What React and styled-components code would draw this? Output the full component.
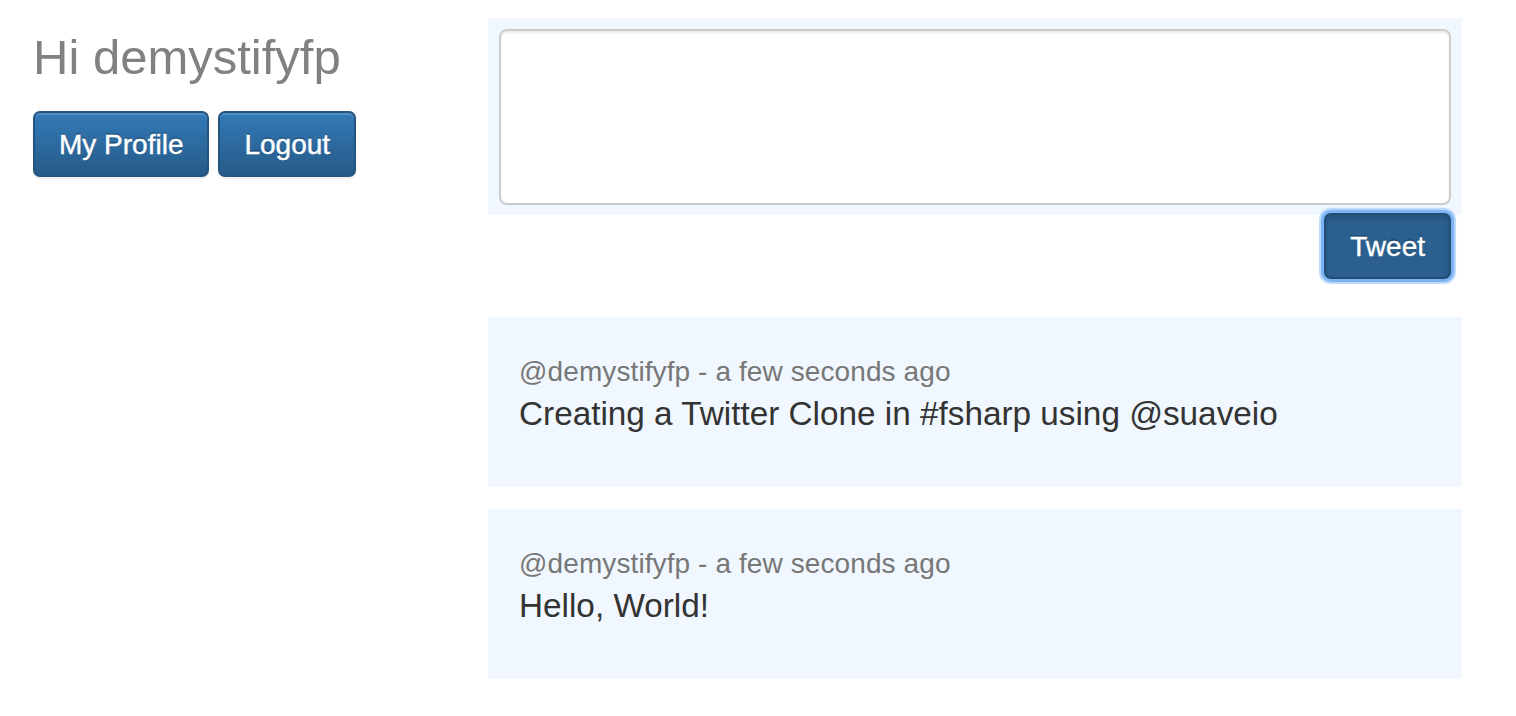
import React from "react";
import styled, { createGlobalStyle } from "styled-components";

const Global = createGlobalStyle`
  html, body { margin: 0; padding: 0; background: #fff; }
  body { font-family: "Liberation Sans", Arial, Helvetica, sans-serif; color: #333; }
  * { box-sizing: border-box; }
`;

const Page = styled.div`
  display: flex;
  align-items: flex-start;
  padding-left: 33px;
`;

const Sidebar = styled.aside`
  width: 455px;
  flex: none;
`;

const Greeting = styled.h3`
  margin: 31px 0 26px;
  font-size: 49px;
  line-height: 1.1;
  font-weight: 400;
  color: #818181;
`;

const ButtonRow = styled.div`
  display: flex;
  gap: 9px;
`;

const Button = styled.button`
  font-family: inherit;
  font-size: 28px;
  line-height: 40px;
  height: 66px;
  padding: 12px 24px;
  color: #fff;
  -webkit-text-stroke: 0.4px #fff;
  border: 2px solid #245580;
  border-radius: 7px;
  background-image: linear-gradient(to bottom, #337ab7 0, #265a88 100%);
  text-shadow: 0 -2px 0 rgba(0, 0, 0, 0.2);
  box-shadow: inset 0 2px 0 rgba(255, 255, 255, 0.15), 0 2px 2px rgba(0, 0, 0, 0.075);
  cursor: pointer;
  white-space: nowrap;
  ${(p) =>
    p.$focused &&
    `
    background-image: none;
    background-color: #2a5f8f;
    border-color: #204d74;
    box-shadow: inset 0 3px 5px rgba(0,0,0,0.125), 0 0 0 3px #7fb4f2, 0 0 1px 5px rgba(140,190,250,0.6);
  `}
`;

const Main = styled.main`
  width: 974px;
  flex: none;
  padding-top: 18px;
`;

const Compose = styled.div`
  background: #f0f7fe;
  padding: 11px;
  height: 197px;
`;

const TextArea = styled.textarea`
  display: block;
  width: 100%;
  height: 176px;
  border: 2px solid #cccccc;
  border-radius: 8px;
  background: #fff;
  box-shadow: inset 0 2px 2px rgba(0, 0, 0, 0.075);
  resize: none;
  font-family: inherit;
  font-size: 28px;
  padding: 12px 24px;
  outline: none;
`;

const Actions = styled.div`
  display: flex;
  justify-content: flex-end;
  padding-right: 11px;
  margin-top: -2px;
`;

const Feed = styled.div`
  display: flex;
  flex-direction: column;
  gap: 22px;
  margin-top: 38px;
`;

const Card = styled.div`
  background: #f0f7fe;
  height: 170px;
  padding: 37px 31px 0;
`;

const Meta = styled.div`
  font-size: 28px;
  line-height: 36px;
  color: #777;
  letter-spacing: 0.1px;
`;

const Body = styled.div`
  margin-top: 2px;
  font-size: 33.3px;
  line-height: 44px;
  color: #333;
`;

const tweets = [
  { user: "demystifyfp", time: "a few seconds ago", text: "Creating a Twitter Clone in #fsharp using @suaveio" },
  { user: "demystifyfp", time: "a few seconds ago", text: "Hello, World!" },
];

export default function App() {
  return (
    <>
      <Global />
      <Page>
        <Sidebar>
          <Greeting>Hi demystifyfp</Greeting>
          <ButtonRow>
            <Button>My Profile</Button>
            <Button>Logout</Button>
          </ButtonRow>
        </Sidebar>
        <Main>
          <Compose>
            <TextArea />
          </Compose>
          <Actions>
            <Button $focused>Tweet</Button>
          </Actions>
          <Feed>
            {tweets.map((t, i) => (
              <Card key={i}>
                <Meta>@{t.user} - {t.time}</Meta>
                <Body>{t.text}</Body>
              </Card>
            ))}
          </Feed>
        </Main>
      </Page>
    </>
  );
}
